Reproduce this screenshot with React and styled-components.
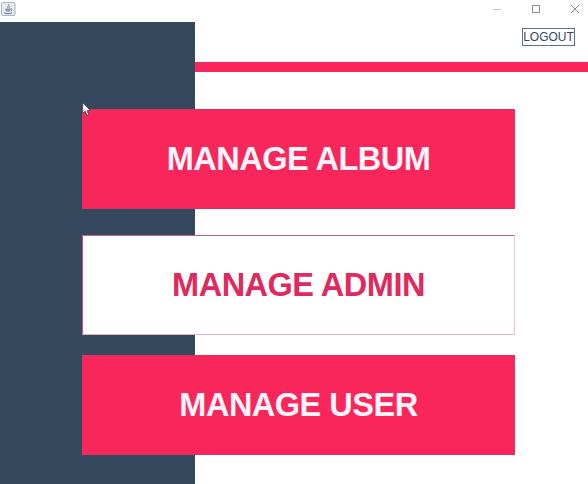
import React from "react";
import styled, { createGlobalStyle } from "styled-components";

const GlobalStyle = createGlobalStyle`
  * { box-sizing: border-box; }
  body { margin: 0; overflow: hidden; }
`;

const Window = styled.div`
  position: relative;
  display: flex;
  flex-direction: column;
  width: 588px;
  height: 484px;
  background: #fff;
  font-family: "Liberation Sans", Arial, sans-serif;
`;

const TitleBar = styled.header`
  display: flex;
  justify-content: space-between;
  flex: none;
  height: 22px;
  padding: 2px 8px 0 1px;
`;

const WindowControls = styled.div`
  display: flex;
  gap: 29px;
  padding-top: 2px;
`;

const Body = styled.div`
  flex: 1;
  display: grid;
  grid-template: 1fr / 195px 1fr;
`;

const Sidebar = styled.aside`
  grid-area: 1 / 1;
  background: #34495e;
`;

const TopPanel = styled.div`
  grid-area: 1 / 2;
  display: flex;
  flex-direction: column;
  align-items: flex-end;
`;

const LogoutButton = styled.button`
  width: 53px;
  height: 18px;
  margin: 6px 13px 16px 0;
  padding: 0;
  border: 1px solid #5f7182;
  background: #fff;
  color: #34495e;
  font: 12px/16px "Liberation Sans", Arial, sans-serif;
  white-space: nowrap;
`;

const Stripe = styled.div`
  width: 100%;
  height: 10px;
  background: #f8265a;
`;

const Menu = styled.nav`
  grid-area: 1 / 1 / 2 / 3;
  justify-self: start;
  align-self: start;
  display: flex;
  flex-direction: column;
  margin: 87px 0 0 82px;
`;

const MenuButton = styled.button`
  width: 433px;
  height: 100px;
  margin-bottom: ${(p) => p.$gap}px;
  padding: 0;
  border: 1px solid;
  border-color: ${(p) => (p.$outlined ? "#bc6783 #f1c3cf #e8b1c1 #d94c76" : "#dc3261 #dc3261 #dc3261 #f8265a")};
  background: ${(p) => (p.$outlined ? "#fff" : "#f8265a")};
  color: ${(p) => (p.$outlined ? "#e02a5d" : "#fff4f9")};
  font: bold 32.5px/98px "Liberation Sans", Arial, sans-serif;
  letter-spacing: -0.5px;
  white-space: nowrap;
`;

const Pointer = styled.svg`
  position: absolute;
  left: 82px;
  top: 102px;
`;

function JavaIcon() {
  return (
    <svg width="15" height="15" viewBox="0 0 15 15" fill="none">
      <rect x="0.5" y="0.5" width="13.5" height="13" rx="1" fill="#e6edf2" stroke="#a9b4bd" />
      <path d="M7.7 2.2c1 1.4-2.1 2.1-.6 4M9 4.2c-1 .6-1.2 1.1-.6 2" stroke="#b46a50" strokeWidth="0.9" />
      <path d="M4.3 7.2h5.2M4.8 8.8h4.2M3.2 10.8c2 1 6 1 7.8 0M9.5 7c2.2-.3 1.8 1.5.2 2" stroke="#5b7386" strokeWidth="1" />
    </svg>
  );
}

const items = [
  { label: "MANAGE ALBUM", gap: 26 },
  { label: "MANAGE ADMIN", gap: 20, outlined: true },
  { label: "MANAGE USER", gap: 0 },
];

export default function App() {
  return (
    <Window>
      <GlobalStyle />
      <TitleBar>
        <JavaIcon />
        <WindowControls>
          <svg width="10" height="10" stroke="#c4c4c4"><path d="M1 5.5h8" /></svg>
          <svg width="10" height="10" stroke="#909090" fill="none"><rect x="1.5" y="1.5" width="7" height="7" /></svg>
          <svg width="10" height="10" stroke="#8c8c8c"><path d="M1 1l8 8M9 1l-8 8" /></svg>
        </WindowControls>
      </TitleBar>
      <Body>
        <Sidebar />
        <TopPanel>
          <LogoutButton>LOGOUT</LogoutButton>
          <Stripe />
        </TopPanel>
        <Menu>
          {items.map((item) => (
            <MenuButton key={item.label} $gap={item.gap} $outlined={item.outlined}>
              {item.label}
            </MenuButton>
          ))}
        </Menu>
      </Body>
      <Pointer width="10" height="15" viewBox="0 0 10 15">
        <path d="M.7.8v10.5l2.4-2.2 1.7 4.1 2-.8-1.7-4h3.3z" fill="#fff" stroke="#2b3441" strokeWidth="0.7" />
      </Pointer>
    </Window>
  );
}
